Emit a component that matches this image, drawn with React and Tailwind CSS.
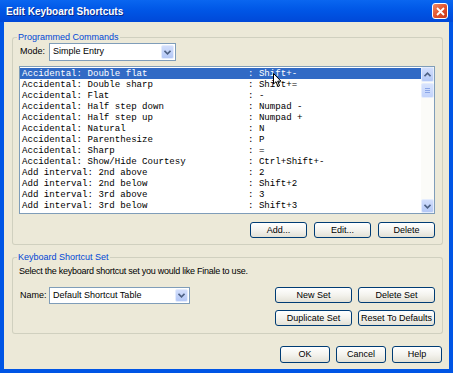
import React from 'react';

const rows = [
  ['Accidental: Double flat', 'Shift+-'],
  ['Accidental: Double sharp', 'Shift+='],
  ['Accidental: Flat', '-'],
  ['Accidental: Half step down', 'Numpad -'],
  ['Accidental: Half step up', 'Numpad +'],
  ['Accidental: Natural', 'N'],
  ['Accidental: Parenthesize', 'P'],
  ['Accidental: Sharp', '='],
  ['Accidental: Show/Hide Courtesy', 'Ctrl+Shift+-'],
  ['Add interval: 2nd above', '2'],
  ['Add interval: 2nd below', 'Shift+2'],
  ['Add interval: 3rd above', '3'],
  ['Add interval: 3rd below', 'Shift+3'],
];

const ui = { fontFamily: '"Liberation Sans", Arial, sans-serif' };

function Btn({ children, className = '' }) {
  return (
    <button
      className={`flex items-center justify-center rounded-[3px] border border-[#003C74] bg-gradient-to-b from-white via-[#F4F3EE] to-[#E3E1D6] text-[9px] leading-none text-black ${className}`}
    >
      {children}
    </button>
  );
}

function Chevron({ up = false }) {
  return (
    <svg width="7" height="5" viewBox="0 0 7 5">
      <path
        d={up ? 'M0.5 4.2 L3.5 1.2 L6.5 4.2' : 'M0.5 0.8 L3.5 3.8 L6.5 0.8'}
        stroke="#4D6185"
        strokeWidth="1.6"
        fill="none"
      />
    </svg>
  );
}

function Combo({ value, className = '' }) {
  return (
    <div className={`flex items-stretch border border-[#7F9DB9] bg-white ${className}`}>
      <span className="flex flex-1 items-center pl-[3px] text-[9px]">{value}</span>
      <span className="m-px flex w-[13px] items-center justify-center rounded-[2px] border border-[#E4ECFD] bg-gradient-to-b from-[#D2DEFC] to-[#B4C8F6]">
        <Chevron />
      </span>
    </div>
  );
}

function Group({ title, children, className = '' }) {
  return (
    <div className={`flex flex-col ${className}`}>
      <div className="flex h-[12px]">
        <div className="mt-[6px] w-[5px] rounded-tl-[3px] border-l border-t border-[#D0D0BF]" />
        <span className="px-[1px] text-[9px] leading-[12px] text-[#0046D5]">{title}</span>
        <div className="mt-[6px] flex-1 rounded-tr-[3px] border-r border-t border-[#D0D0BF]" />
      </div>
      <div className="rounded-b-[3px] border-x border-b border-[#D0D0BF]">{children}</div>
    </div>
  );
}

export default function App() {
  return (
    <div className="flex h-[373px] w-[453px] flex-col bg-[#0055E5]" style={ui}>
      {/* title bar */}
      <div className="flex h-[22px] items-center justify-between bg-gradient-to-b from-[#0A66F0] via-[#0055E5] to-[#0048D8] pl-[6px] pr-[5px]">
        <span className="text-[10px] font-bold text-white [text-shadow:1px_1px_0_#0A2A8A]">
          Edit Keyboard Shortcuts
        </span>
        <span className="flex h-[16px] w-[16px] items-center justify-center rounded-[3px] border border-white bg-gradient-to-br from-[#F08A64] via-[#E2532E] to-[#C8381A]">
          <svg width="9" height="9" viewBox="0 0 9 9">
            <path d="M1 1 L8 8 M8 1 L1 8" stroke="white" strokeWidth="1.8" />
          </svg>
        </span>
      </div>

      {/* body */}
      <div className="mx-[4px] mb-[4px] flex flex-1 flex-col bg-[#ECE9D8] pl-[8px] pr-[6px] pt-[9px] text-black">
        <Group title="Programmed Commands">
          <div className="flex flex-col pl-[6px] pr-[7px] pb-[6px]">
            <div className="flex h-[18px] items-center">
              <span className="w-[30px] pl-px text-[9px]">Mode:</span>
              <Combo value="Simple Entry" className="h-[18px] w-[127px]" />
            </div>

            <div className="relative mt-[5px] flex h-[148px] border border-[#7F9DB9] bg-white">
              <div className="flex-1 pt-px" style={{ fontFamily: '"Liberation Mono", "Courier New", monospace' }}>
                {rows.map(([name, key], i) => (
                  <div
                    key={name}
                    className={`flex h-[11px] items-center whitespace-pre pl-[2px] text-[9.1px] leading-[11px] ${
                      i === 0 ? 'bg-[#316AC5] text-white' : 'text-black'
                    }`}
                  >
                    <span className="w-[226px]">{name}</span>
                    <span>{': ' + key}</span>
                  </div>
                ))}
              </div>
              {/* scrollbar */}
              <div className="flex w-[13px] flex-col bg-[#FBFBF8]">
                <div className="flex h-[15px] items-center justify-center rounded-[2px] border border-[#E4ECFD] bg-gradient-to-b from-[#D2DEFC] to-[#B4C8F6]">
                  <Chevron up />
                </div>
                <div className="mt-px flex h-[15px] flex-col items-center justify-center gap-px rounded-[2px] border border-[#E4ECFD] bg-gradient-to-b from-[#D8E3FD] to-[#C2D3FB]">
                  <span className="h-px w-[5px] bg-[#8CA7E8]" />
                  <span className="h-px w-[5px] bg-[#8CA7E8]" />
                  <span className="h-px w-[5px] bg-[#8CA7E8]" />
                </div>
                <div className="flex-1" />
                <div className="flex h-[14px] items-center justify-center rounded-[2px] border border-[#E4ECFD] bg-gradient-to-b from-[#D2DEFC] to-[#B4C8F6]">
                  <Chevron />
                </div>
              </div>
              {/* mouse pointer */}
              <svg className="absolute left-[253px] top-[6px]" width="9" height="15" viewBox="0 0 9 15">
                <path d="M0.5 0.5 L0.5 11 L3 8.7 L5 13.5 L6.6 12.8 L4.7 8.2 L8 8.2 Z" fill="white" stroke="black" strokeWidth="1" />
              </svg>
            </div>

            <div className="mt-[8px] flex justify-end gap-[7px]">
              <Btn className="h-[16px] w-[57px]">Add...</Btn>
              <Btn className="h-[16px] w-[57px]">Edit...</Btn>
              <Btn className="h-[16px] w-[57px]">Delete</Btn>
            </div>
          </div>
        </Group>

        <Group title="Keyboard Shortcut Set" className="mt-[6px]">
          <div className="flex flex-col pl-[6px] pr-[7px] pb-[7px]">
            <p className="mt-[2px] text-[9px] leading-[12px] tracking-[-0.25px]">
              Select the keyboard shortcut set you would like Finale to use.
            </p>
            <div className="mt-[10px] flex items-start">
              <span className="flex h-[17px] w-[30px] items-center pl-px text-[9px]">Name:</span>
              <Combo value="Default Shortcut Table" className="h-[17px] w-[141px]" />
              <div className="ml-auto flex flex-col gap-[7px]">
                <div className="flex gap-[6px]">
                  <Btn className="h-[16px] w-[77px]">New Set</Btn>
                  <Btn className="h-[16px] w-[77px]">Delete Set</Btn>
                </div>
                <div className="flex gap-[6px]">
                  <Btn className="h-[16px] w-[77px]">Duplicate Set</Btn>
                  <Btn className="h-[16px] w-[77px]">Reset To Defaults</Btn>
                </div>
              </div>
            </div>
          </div>
        </Group>

        <div className="mt-[12px] flex justify-end gap-[6px] pr-px">
          <Btn className="h-[17px] w-[50px]">OK</Btn>
          <Btn className="h-[17px] w-[50px]">Cancel</Btn>
          <Btn className="h-[17px] w-[50px]">Help</Btn>
        </div>
      </div>
    </div>
  );
}
